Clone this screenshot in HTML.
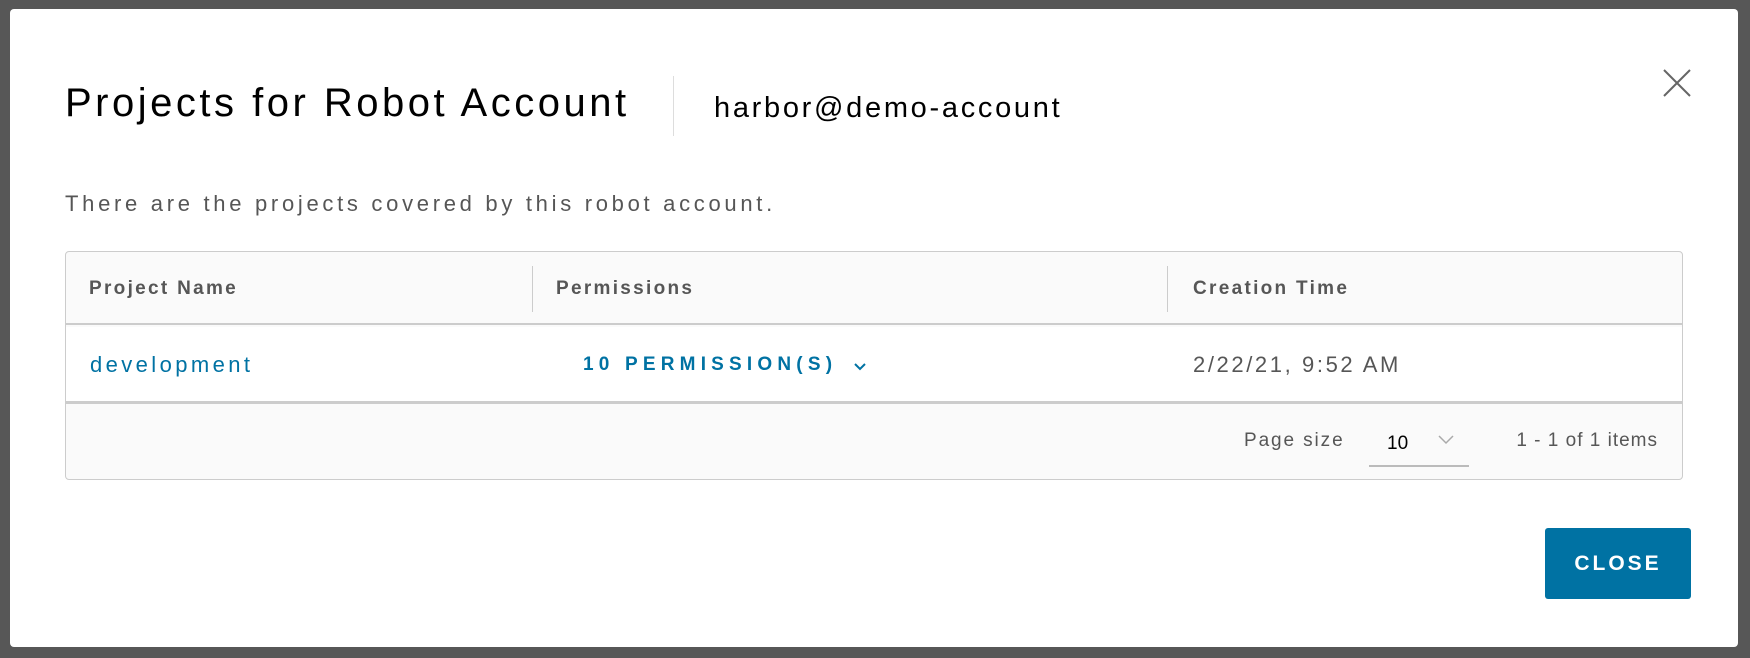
<!DOCTYPE html>
<html><head><meta charset="utf-8"><style>
*{margin:0;padding:0;box-sizing:border-box}
body{width:1750px;height:658px;background:#575757;position:relative;overflow:hidden;font-family:"Liberation Sans",sans-serif}
.modal{position:absolute;left:10px;top:9px;width:1728px;height:638px;background:#fff;border-radius:4px}
.a{position:absolute;white-space:nowrap}
.title{left:55px;top:70px;font-size:40px;color:#000;line-height:48px;letter-spacing:3.5px}
.div{left:663px;top:67px;width:1px;height:60px;background:#ddd}
.sub{left:704px;top:82px;font-size:29px;color:#000;line-height:34px;letter-spacing:2.7px}
.desc{left:55px;top:182px;font-size:22px;color:#565656;letter-spacing:3.7px}
.tbl{left:55px;top:242px;width:1618px;height:229px;border:1px solid #ccc;border-radius:4px;background:#fafafa;overflow:hidden}
.hd{position:absolute;top:0;left:0;right:0;height:73px;border-bottom:2px solid #ccc}
.h{position:absolute;top:26px;font-size:19px;font-weight:bold;color:#565656;letter-spacing:2.3px}
.cd{position:absolute;top:14px;width:1px;height:46px;background:#ccc}
.row{position:absolute;top:75px;left:0;right:0;height:77px;background:#fff;border-bottom:3px solid #ccc}
.r{position:absolute;top:25px;font-size:22px}
.ft{position:absolute;font-size:19px;color:#565656}
.btn{left:1535px;top:519px;width:146px;height:71px;background:#0072a3;border-radius:3px;color:#fff;font-weight:bold;font-size:21px;letter-spacing:3px;text-align:center;line-height:71px}
</style></head><body>
<div class="modal">
<div class="a title">Projects for Robot Account</div>
<div class="a div"></div>
<div class="a sub">harbor@demo-account</div>
<svg class="a" style="left:1653px;top:60px" width="28" height="28" viewBox="0 0 28 28"><path d="M1 1L27 27M27 1L1 27" stroke="#666" stroke-width="2"/></svg>
<div class="a desc">There are the projects covered by this robot account.</div>
<div class="a tbl">
 <div class="hd">
  <div class="h" style="left:23px">Project Name</div>
  <div class="cd" style="left:466px"></div>
  <div class="h" style="left:490px">Permissions</div>
  <div class="cd" style="left:1101px"></div>
  <div class="h" style="left:1127px">Creation Time</div>
 </div>
 <div class="row">
  <div class="r" style="left:24px;color:#0072a3;letter-spacing:3.4px">development</div>
  <div class="r" style="left:517px;top:27px;color:#0072a3;font-size:19px;font-weight:bold;letter-spacing:5.2px">10 PERMISSION(S)</div>
  <svg style="position:absolute;left:788px;top:36px" width="12" height="8" viewBox="0 0 12 8"><path d="M1 1L6 6L11 1" stroke="#0072a3" stroke-width="2" fill="none"/></svg>
  <div class="r" style="left:1127px;color:#565656;letter-spacing:2.6px">2/22/21, 9:52 AM</div>
 </div>
 <div class="ft" style="left:1178px;top:178px;letter-spacing:1.9px">Page size</div>
 <div class="ft" style="left:1321px;top:181px;color:#000">10</div>
 <svg style="position:absolute;left:1372px;top:183px" width="16" height="10" viewBox="0 0 16 10"><path d="M1 1L8 8L15 1" stroke="#aaa" stroke-width="1.5" fill="none"/></svg>
 <div style="position:absolute;left:1303px;top:213px;width:100px;height:2px;background:#bbb"></div>
 <div class="ft" style="right:24px;top:178px;letter-spacing:1px">1 - 1 of 1 items</div>
</div>
<div class="a btn">CLOSE</div>
</div>
</body></html>
